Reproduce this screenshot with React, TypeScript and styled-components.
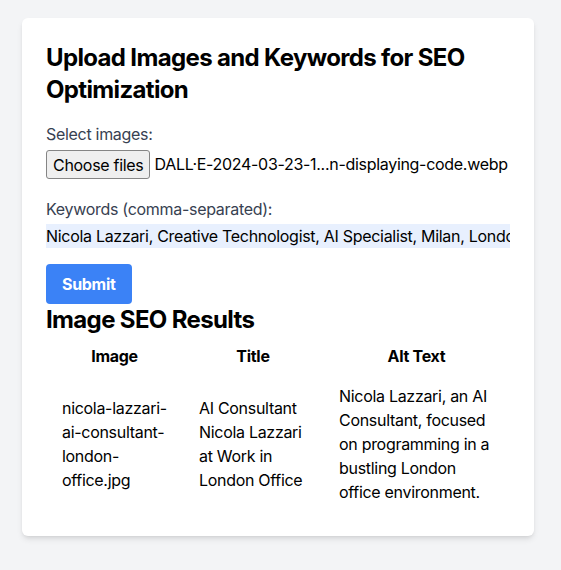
import * as React from 'react'
import styled, { createGlobalStyle } from 'styled-components'

const GlobalStyle = createGlobalStyle`
  * {
    box-sizing: border-box;
  }

  body {
    margin: 0;
    background: #f3f4f6;
    font-family: Inter, "Noto Sans", "Liberation Sans", sans-serif;
    font-size: 16px;
    line-height: 24px;
    letter-spacing: -0.3px;
    color: #000;
  }

  button,
  input {
    letter-spacing: inherit;
  }
`

const Page = styled.div`
  padding: 18px 22px 35px;
`

const Card = styled.div`
  width: 512px;
  padding: 24px;
  background: #fff;
  border-radius: 6px;
  box-shadow: 0 4px 6px -1px rgba(0, 0, 0, 0.1), 0 2px 4px -2px rgba(0, 0, 0, 0.1);
`

const Heading = styled.h2<{ $spaced?: boolean }>`
  margin: 0 0 ${p => (p.$spaced ? '16px' : '0')};
  font-size: 24px;
  line-height: 32px;
  font-weight: 700;
  letter-spacing: -0.65px;
`

const Field = styled.div`
  margin-bottom: 16px;
`

const Label = styled.label`
  display: block;
  color: #374151;
  margin-bottom: 4px;
`

const FileRow = styled.div`
  display: flex;
  align-items: flex-start;
  gap: 4px;
  height: 31px;
`

const FileButton = styled.button`
  height: 29px;
  padding: 0 6px;
  font: inherit;
  font-size: 16px;
  color: #000;
  background: #efefef;
  border: 1px solid #858585;
  border-radius: 3px;
  white-space: nowrap;
`

const FileName = styled.span`
  line-height: 29px;
  white-space: nowrap;
  letter-spacing: -0.3px;
`

const KeywordInput = styled.input`
  display: block;
  width: 100%;
  height: 24px;
  padding: 0;
  margin-top: -1px;
  border: none;
  outline: none;
  background: #e8f0fe;
  font: inherit;
  color: #000;
`

const SubmitButton = styled.button`
  display: block;
  padding: 8px 16px;
  border: none;
  border-radius: 4px;
  background: #3b82f6;
  color: #fff;
  font: inherit;
  font-weight: 700;
`

const Table = styled.table`
  width: 100%;
  border-collapse: collapse;
  table-layout: fixed;
`

const Th = styled.th`
  padding: 8px 16px;
  font-weight: 700;
  text-align: center;
`

const Td = styled.td`
  padding: 8px 16px;
  vertical-align: middle;
  text-align: left;
  word-wrap: break-word;
`

const results = [
  {
    image: 'nicola-lazzari-ai-consultant-london-office.jpg',
    title: 'AI Consultant Nicola Lazzari at Work in London Office',
    alt: 'Nicola Lazzari, an AI Consultant, focused on programming in a bustling London office environment.',
  },
]

export default function App() {
  return (
    <Page>
      <GlobalStyle />
      <Card>
        <Heading $spaced>Upload Images and Keywords for SEO Optimization</Heading>
        <form onSubmit={e => e.preventDefault()}>
          <Field>
            <Label>Select images:</Label>
            <FileRow>
              <FileButton type="button">Choose files</FileButton>
              <FileName>DALL·E-2024-03-23-1...n-displaying-code.webp</FileName>
            </FileRow>
          </Field>
          <Field>
            <Label htmlFor="keywords">Keywords (comma-separated):</Label>
            <KeywordInput
              id="keywords"
              readOnly
              value="Nicola Lazzari, Creative Technologist, AI Specialist, Milan, London, Innovation"
            />
          </Field>
          <SubmitButton type="submit">Submit</SubmitButton>
        </form>
        <Heading>Image SEO Results</Heading>
        <Table>
          <colgroup>
            <col style={{ width: 137 }} />
            <col style={{ width: 140 }} />
            <col />
          </colgroup>
          <thead>
            <tr>
              <Th>Image</Th>
              <Th>Title</Th>
              <Th>Alt Text</Th>
            </tr>
          </thead>
          <tbody>
            {results.map(r => (
              <tr key={r.image}>
                <Td>{r.image.replace(/-/g, '-\u200b')}</Td>
                <Td>{r.title}</Td>
                <Td>{r.alt}</Td>
              </tr>
            ))}
          </tbody>
        </Table>
      </Card>
    </Page>
  )
}
